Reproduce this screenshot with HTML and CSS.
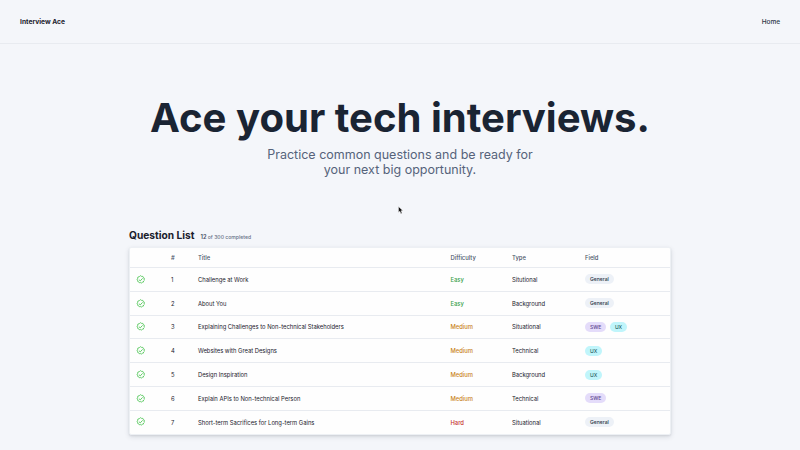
FILE: index.html
```html
<!DOCTYPE html>
<html lang="en">
<head>
<meta charset="utf-8">
<title>Interview Ace</title>
<link rel="stylesheet" href="styles.css">
</head>
<body>
<svg class="defs" aria-hidden="true">
  <symbol id="check" viewBox="0 0 24 24">
    <path d="M12 2.200l2.500 1.500 2.900-.2 1.200 2.700 2.500 1.500-.6 2.900 1.100 2.700-2.100 2-.7 2.900-2.900.5-2.200 1.900-2.600-1.300-2.800.4-1.600-2.500-2.700-1.100.2-2.900-1.600-2.500 1.800-2.300.2-2.900 2.800-.9z"/>
    <path d="M8 12.400l2.800 2.700 5.400-5.800"/>
  </symbol>
</svg>
<header class="nav">
  <a class="brand">Interview Ace</a>
  <a class="link">Home</a>
</header>
<main>
  <section class="hero">
    <h1>Ace your tech interviews.</h1>
    <p>Practice common questions and be ready for<br>your next big opportunity.</p>
  </section>
  <section class="questions">
    <div class="heading">
      <h2>Question List</h2>
      <span class="progress"><b>12</b> of 300 completed</span>
    </div>
    <div class="table">
      <div class="row head"><span></span><span>#</span><span>Title</span><span>Difficulty</span><span>Type</span><span>Field</span></div>
      <div class="row"><svg class="icon"><use href="#check"/></svg><span>1</span><span>Challenge at Work</span><span class="easy">Easy</span><span>Situtional</span><span class="tags"><i class="tag general">General</i></span></div>
      <div class="row"><svg class="icon"><use href="#check"/></svg><span>2</span><span>About You</span><span class="easy">Easy</span><span>Background</span><span class="tags"><i class="tag general">General</i></span></div>
      <div class="row"><svg class="icon"><use href="#check"/></svg><span>3</span><span>Explaining Challenges to Non-technical Stakeholders</span><span class="medium">Medium</span><span>Situational</span><span class="tags"><i class="tag swe">SWE</i><i class="tag ux">UX</i></span></div>
      <div class="row"><svg class="icon"><use href="#check"/></svg><span>4</span><span>Websites with Great Designs</span><span class="medium">Medium</span><span>Technical</span><span class="tags"><i class="tag ux">UX</i></span></div>
      <div class="row"><svg class="icon"><use href="#check"/></svg><span>5</span><span>Design Inspiration</span><span class="medium">Medium</span><span>Background</span><span class="tags"><i class="tag ux">UX</i></span></div>
      <div class="row"><svg class="icon"><use href="#check"/></svg><span>6</span><span>Explain APIs to Non-technical Person</span><span class="medium">Medium</span><span>Technical</span><span class="tags"><i class="tag swe">SWE</i></span></div>
      <div class="row"><svg class="icon"><use href="#check"/></svg><span>7</span><span>Short-term Sacrifices for Long-term Gains</span><span class="hard">Hard</span><span>Situational</span><span class="tags"><i class="tag general">General</i></span></div>
    </div>
  </section>
</main>
<svg class="cursor" viewBox="0 0 12 18"><path d="M1 1v13l3-3 2.300 5.500 2.600-1.100L6.700 10H11z"/></svg>
</body>
</html>
```

FILE: styles.css
```css
* { box-sizing: border-box; }
body {
  margin: 0;
  height: 450px;
  overflow: hidden;
  background: #f4f6fa;
  color: #1a202c;
  font-family: Inter, "Liberation Sans", sans-serif;
}
.defs { display: none; }
.nav {
  display: flex;
  align-items: center;
  justify-content: space-between;
  height: 44px;
  padding: 0 20px;
  border-bottom: 1px solid #e8ebf0;
  font-size: 6.7px;
}
.brand { font-weight: 700; }
.link { font-size: 6.500px; font-weight: 500; color: #2d3748; }
.hero { padding-top: 49px; text-align: center; }
h1 {
  margin: 0;
  font-size: 40.1px;
  line-height: 49px;
  font-weight: 700;
  color: #1a2433;
  white-space: nowrap;
}
.hero p {
  margin: 5px 0 0;
  font-size: 12.5px;
  line-height: 15px;
  color: #56637a;
}
.questions { width: 542px; margin: 51px auto 0; }
.heading { display: flex; align-items: baseline; gap: 6px; height: 19px; }
h2 { margin: 0; font-size: 10.2px; line-height: 14px; font-weight: 700; }
.progress { font-size: 5.1px; font-weight: 500; color: #667186; }
.progress b { font-size: 5.7px; font-weight: 600; color: #3f4a5e; }
.table {
  background: #fefefe;
  border: 1px solid #edf0f4;
  border-radius: 2px;
  box-shadow: 0 2px 5px rgba(30, 40, 60, .13), 0 1px 2px rgba(30, 40, 60, .09);
}
.row {
  display: grid;
  grid-template-columns: 35px 27px 252.5px 61.5px 73px 1fr;
  align-items: center;
  height: 23.8px;
  padding-left: 6px;
  font-size: 5.84px;
  border-top: 1px solid #e8ebf0;
}
.head { height: 19px; border-top: 0; font-weight: 500; color: #4a5568; }
.icon {
  width: 9.4px;
  height: 9.4px;
  fill: none;
  stroke: #5fcb65;
  stroke-width: 2.5;
  stroke-linecap: round;
  stroke-linejoin: round;
}
.easy, .medium, .hard { font-weight: 500; }
.easy { color: #38a149; }
.medium { color: #c98218; }
.hard { color: #c53030; }
.tags { display: flex; gap: 3.500px; }
.tag {
  height: 10px;
  padding: 0 5px;
  border-radius: 5px;
  font-size: 5.05px;
  line-height: 10px;
  font-style: normal;
  font-weight: 500;
}
.general { background: #edf1f7; color: #2d3748; }
.swe { background: #e4dcfa; color: #61468f; }
.ux { background: #c0f5fb; color: #285e61; }
.cursor {
  position: absolute;
  left: 397.5px;
  top: 206px;
  width: 5.500px;
  height: 8.500px;
  fill: #111;
  stroke: #fff;
  stroke-width: 1;
}
```
